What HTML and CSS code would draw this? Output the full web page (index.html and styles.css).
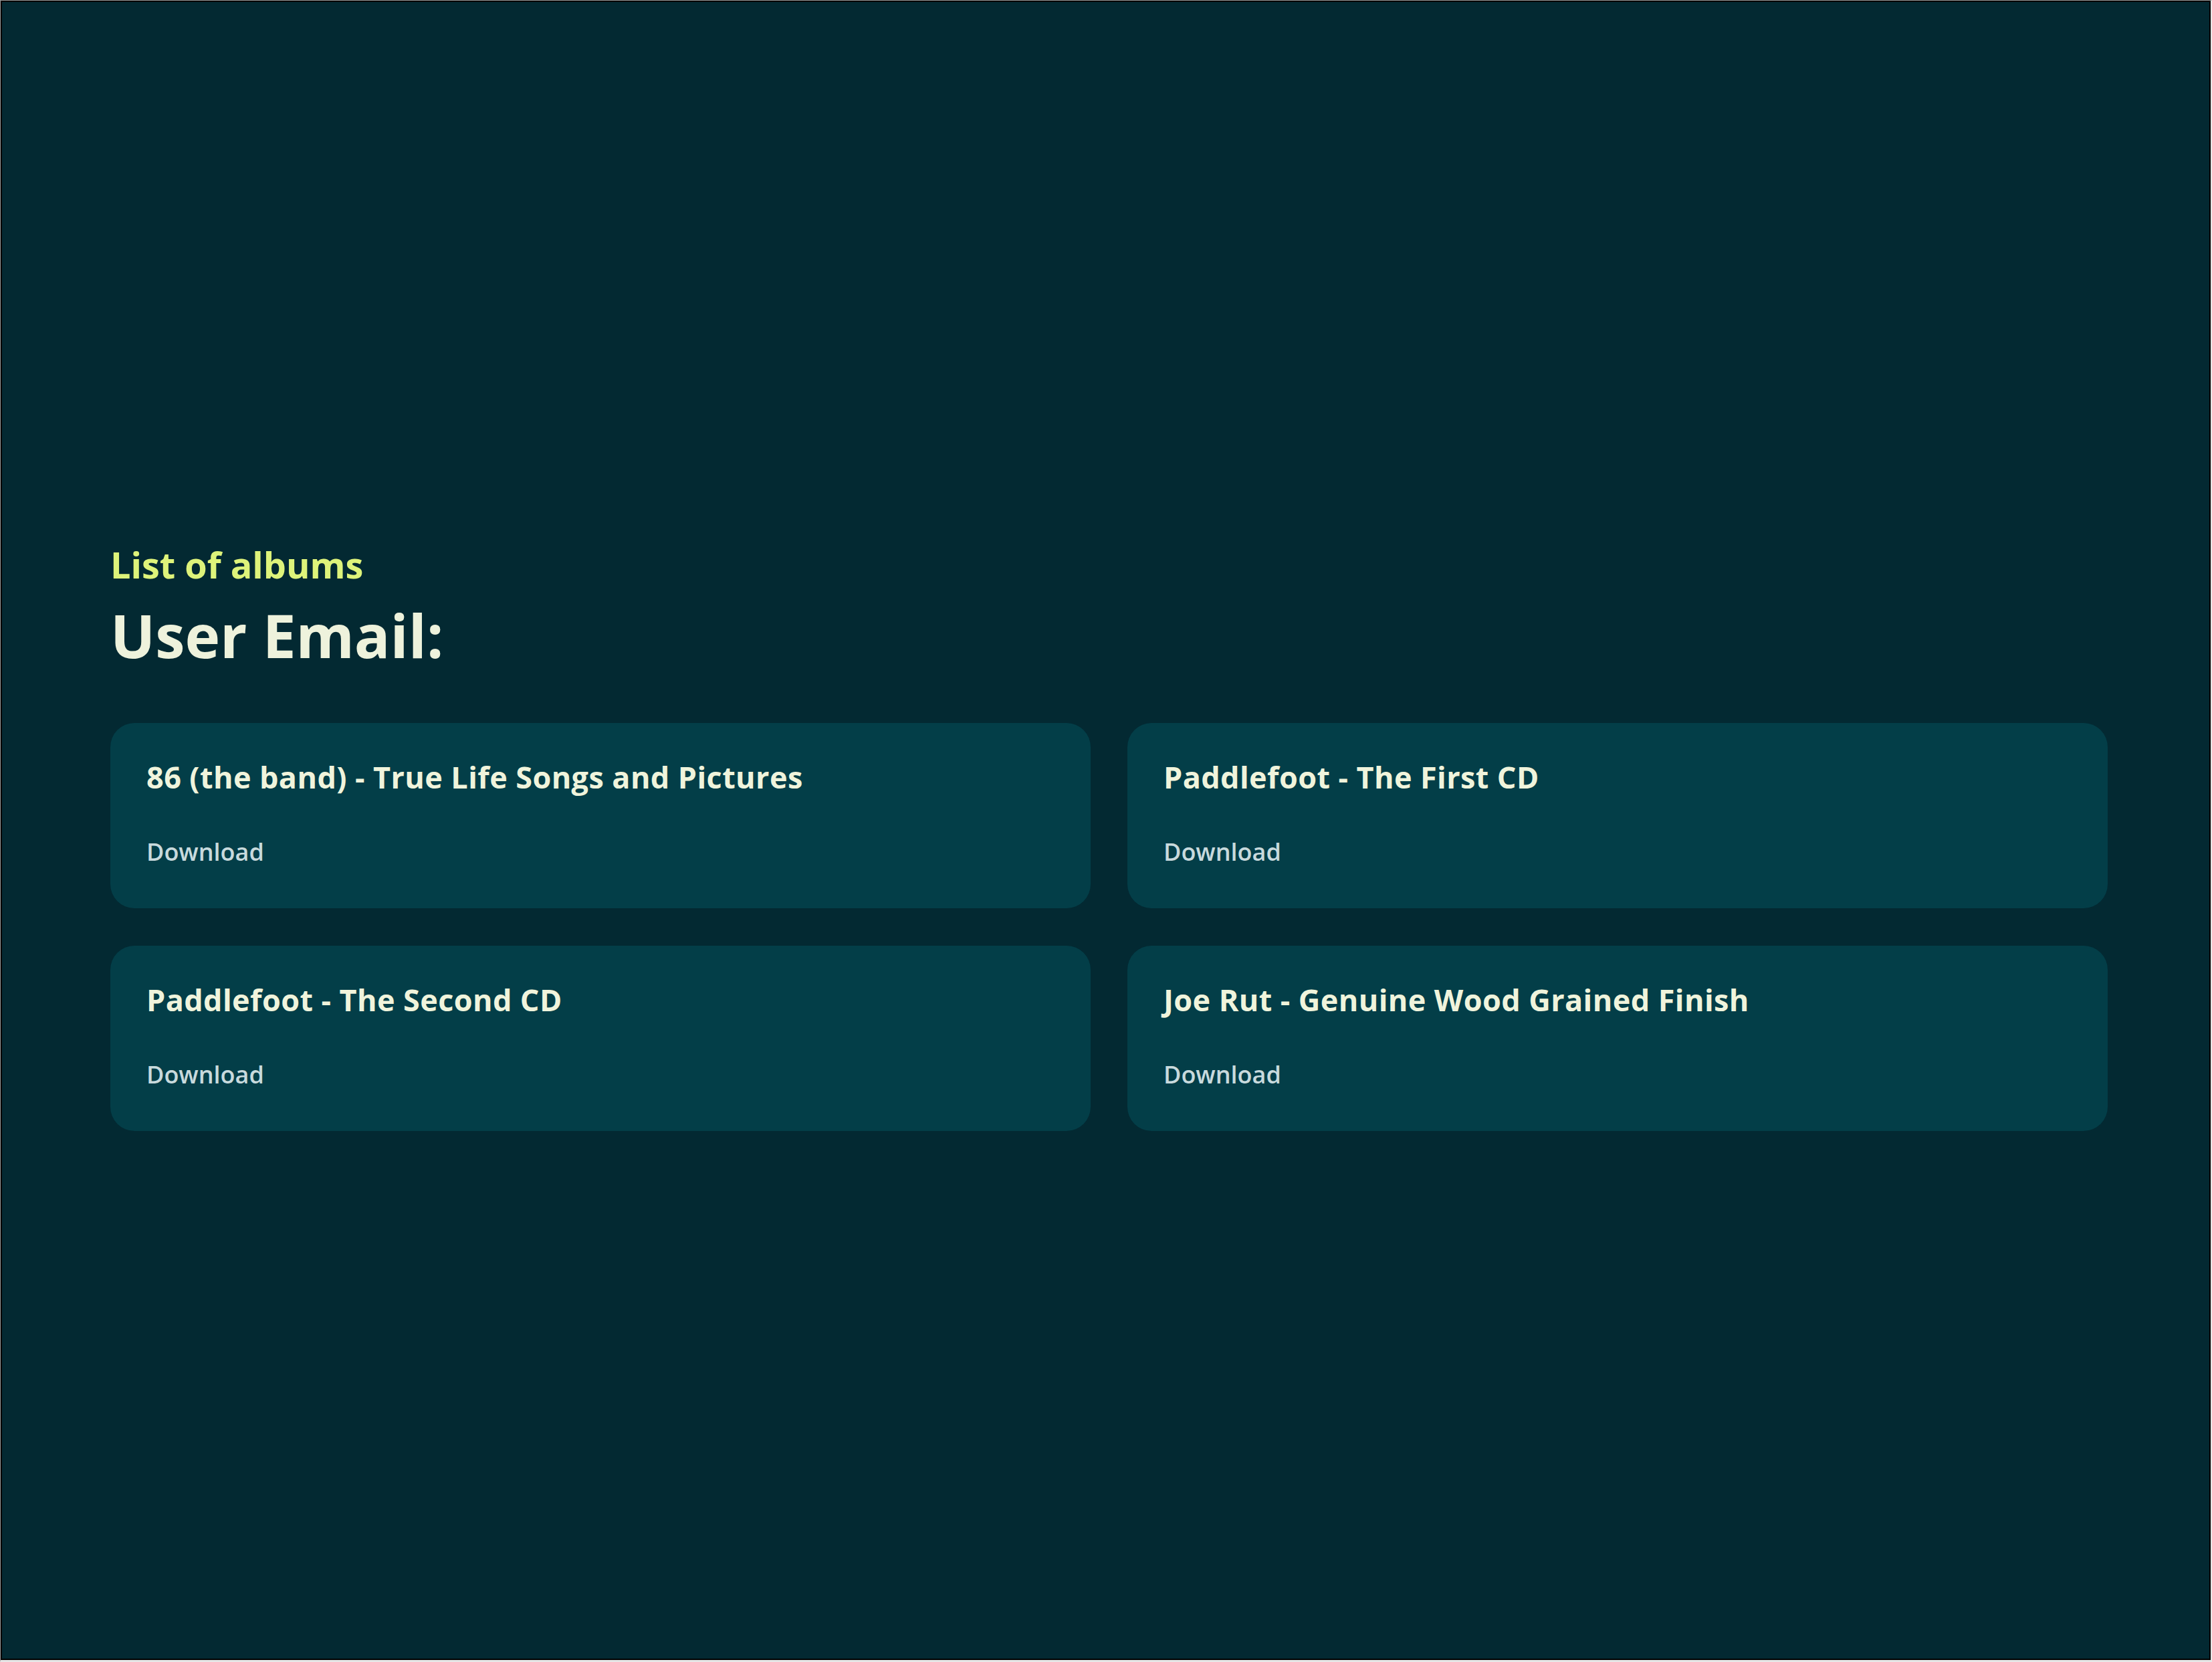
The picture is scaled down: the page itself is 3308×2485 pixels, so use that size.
FILE: index.html
```html
<!DOCTYPE html>
<html lang="en">
<head>
<meta charset="utf-8">
<title>List of albums</title>
<link rel="stylesheet" href="styles.css">
</head>
<body>
<div class="frame">
  <main class="page">
    <header class="intro">
      <p class="eyebrow">List of albums</p>
      <h1 class="title">User Email:</h1>
    </header>
    <section class="albums">
      <article class="card">
        <h2 class="card-title">86 (the band) - True Life Songs and Pictures</h2>
        <a class="card-link" href="#">Download</a>
      </article>
      <article class="card">
        <h2 class="card-title">Paddlefoot - The First CD</h2>
        <a class="card-link" href="#">Download</a>
      </article>
      <article class="card">
        <h2 class="card-title">Paddlefoot - The Second CD</h2>
        <a class="card-link" href="#">Download</a>
      </article>
      <article class="card">
        <h2 class="card-title">Joe Rut - Genuine Wood Grained Finish</h2>
        <a class="card-link" href="#">Download</a>
      </article>
    </section>
  </main>
</div>
</body>
</html>
```

FILE: styles.css
```css
html, body {
  margin: 0;
  padding: 0;
  height: 100%;
}

body {
  background: #e6e6e6;
  font-family: "Open Sans", "Liberation Sans", sans-serif;
}

.frame {
  box-sizing: border-box;
  height: 100vh;
  border-top: 1px solid #9a9a9a;
  border-left: 1px solid #9a9a9a;
  border-right: 2px solid #e6e6e6;
  border-bottom: 3px solid #e6e6e6;
}

.page {
  box-sizing: border-box;
  height: 100%;
  background: #032932;
  border: 2px solid #000;
  padding: 809px 152px 0 162px;
}

.intro {
  margin: 0;
}

.eyebrow {
  margin: 0;
  font-size: 54px;
  line-height: 1.2;
  font-weight: 700;
  color: #def37a;
}

.title {
  margin: 19px 0 0;
  font-size: 89px;
  line-height: 108px;
  font-weight: 700;
  color: #eef2dc;
}

.albums {
  margin-top: 77px;
  display: grid;
  grid-template-columns: 1fr 1fr;
  column-gap: 55px;
  row-gap: 56px;
}

.card {
  background: #033e48;
  border-radius: 36px;
  padding: 55px 54px 63px;
  display: flex;
  flex-direction: column;
  align-items: flex-start;
}

.card-title {
  margin: 0;
  font-size: 45px;
  line-height: 52.8px;
  font-weight: 700;
  letter-spacing: 0.4px;
  color: #f0f4dc;
}

.card-link {
  margin-top: 63px;
  font-size: 36px;
  line-height: 43.2px;
  font-weight: 600;
  color: #c8dadd;
  text-decoration: none;
}
```
